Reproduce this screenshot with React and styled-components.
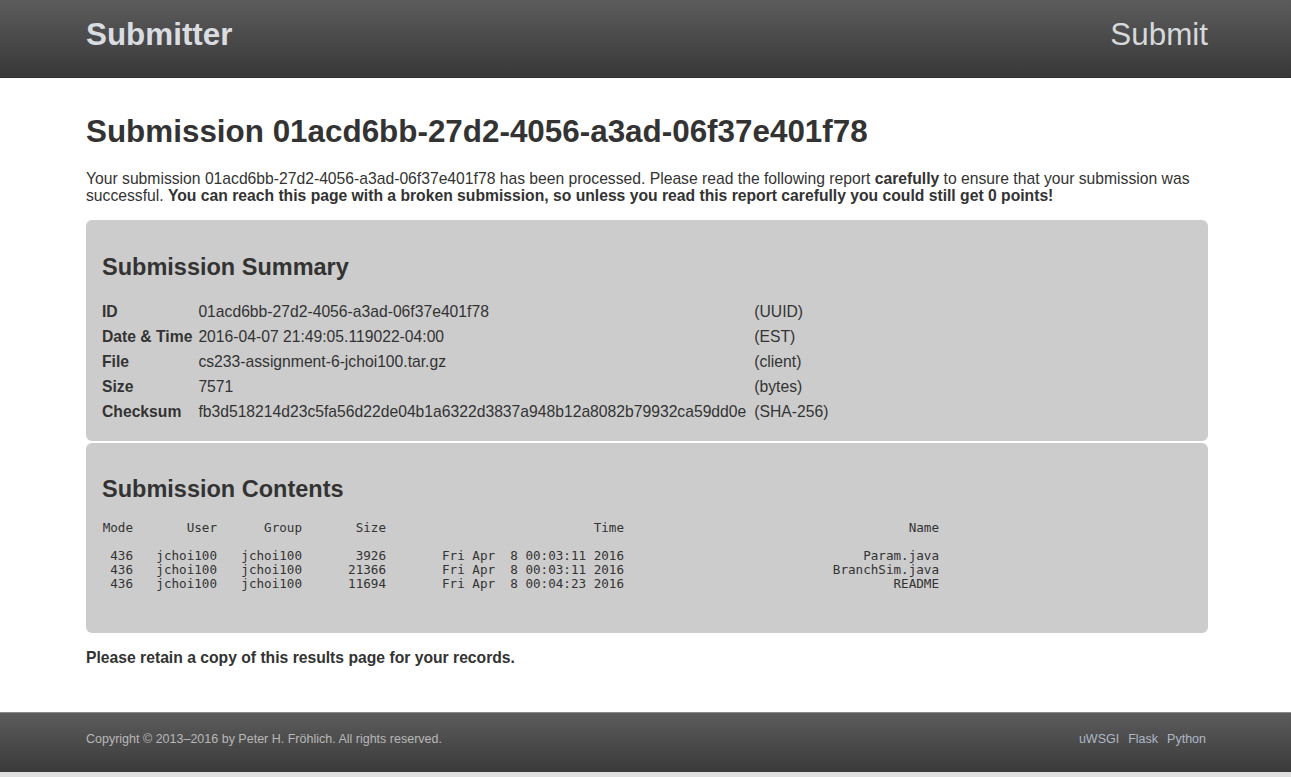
import React from "react";
import styled, { createGlobalStyle } from "styled-components";

const GlobalStyle = createGlobalStyle`
  html, body {
    margin: 0;
    padding: 0;
    background: #e2e2e2;
  }
  body {
    font-family: "Liberation Sans", Arial, sans-serif;
    color: #333;
  }
`;

const summary = [
  ["ID", "01acd6bb-27d2-4056-a3ad-06f37e401f78", "(UUID)"],
  ["Date & Time", "2016-04-07 21:49:05.119022-04:00", "(EST)"],
  ["File", "cs233-assignment-6-jchoi100.tar.gz", "(client)"],
  ["Size", "7571", "(bytes)"],
  ["Checksum", "fb3d518214d23c5fa56d22de04b1a6322d3837a948b12a8082b79932ca59dd0e", "(SHA-256)"],
];

const columns = [
  ["Mode", 31],
  ["User", 84],
  ["Group", 85],
  ["Size", 84],
  ["Time", 238],
  ["Name", 315],
];

const files = [
  ["436", "jchoi100", "jchoi100", "3926", "Fri Apr  8 00:03:11 2016", "Param.java"],
  ["436", "jchoi100", "jchoi100", "21366", "Fri Apr  8 00:03:11 2016", "BranchSim.java"],
  ["436", "jchoi100", "jchoi100", "11694", "Fri Apr  8 00:04:23 2016", "README"],
];

const App = () => {
  return (
    <>
      <GlobalStyle />
      <Page>
        <Header>
          <Bar>
            <Brand>Submitter</Brand>
            <NavLink>Submit</NavLink>
          </Bar>
        </Header>
        <Main>
          <Title>Submission 01acd6bb-27d2-4056-a3ad-06f37e401f78</Title>
          <Intro>
            Your submission 01acd6bb-27d2-4056-a3ad-06f37e401f78 has been processed. Please read the
            following report <b>carefully</b> to ensure that your submission was successful.{" "}
            <b>You can reach this page with a broken submission, so unless you read this report carefully you could still get 0 points!</b>
          </Intro>
          <Panel>
            <PanelTitle>Submission Summary</PanelTitle>
            <SummaryTable>
              <tbody>
                {summary.map(([k, v, u]) => (
                  <tr key={k}>
                    <th>{k}</th>
                    <td>{v}</td>
                    <td>{u}</td>
                  </tr>
                ))}
              </tbody>
            </SummaryTable>
          </Panel>
          <Panel $contents>
            <PanelTitle>Submission Contents</PanelTitle>
            <Listing>
              <ListHead>
                {columns.map(([name, w]) => (
                  <Cell key={name} $w={w}>{name}</Cell>
                ))}
              </ListHead>
              {files.map((f) => (
                <ListRow key={f[5]}>
                  {f.map((v, i) => (
                    <Cell key={i} $w={columns[i][1]}>{v}</Cell>
                  ))}
                </ListRow>
              ))}
            </Listing>
          </Panel>
          <Note>Please retain a copy of this results page for your records.</Note>
        </Main>
        <Footer>
          <Bar>
            <Copy>Copyright © 2013–2016 by Peter H. Fröhlich. All rights reserved.</Copy>
            <Links>
              <span>uWSGI</span>
              <span>Flask</span>
              <span>Python</span>
            </Links>
          </Bar>
        </Footer>
      </Page>
    </>
  );
};

export default App;

const Page = styled.div`
  display: flex;
  flex-direction: column;
  background: #fff;
`;

const Header = styled.header`
  height: 77px;
  background: linear-gradient(#5c5c5c, #383838);
  border-bottom: 1px solid #2e2e2e;
  display: flex;
  align-items: center;
`;

const Bar = styled.div`
  width: 1122px;
  margin-left: 86px;
  display: flex;
  align-items: center;
  justify-content: space-between;
`;

const Brand = styled.div`
  font-size: 31.4px;
  font-weight: bold;
  color: #d9dce0;
  margin-top: -7px;
`;

const NavLink = styled.div`
  font-size: 31.4px;
  color: #d6d9dc;
  margin-top: -7px;
`;

const Main = styled.main`
  width: 1122px;
  margin-left: 86px;
  padding-top: 36px;
  padding-bottom: 46px;
`;

const Title = styled.h1`
  margin: 0 0 20px;
  font-size: 31.4px;
  line-height: 36px;
  font-weight: bold;
  color: #333;
`;

const Intro = styled.p`
  margin: 0 0 16px;
  font-size: 15.7px;
  line-height: 17px;
  color: #333;
`;

const Panel = styled.section`
  background: #cccccc;
  border-radius: 6px;
  padding: ${(p) => (p.$contents ? "32px 16px 42px" : "33px 16px 17px")};
  & + & {
    margin-top: 2px;
  }
`;

const PanelTitle = styled.h2`
  margin: 0 0 18px;
  font-size: 23.5px;
  line-height: 28px;
  font-weight: bold;
  color: #333;
`;

const SummaryTable = styled.table`
  border-collapse: collapse;
  font-size: 15.7px;
  color: #333;
  th, td {
    padding: 0;
    height: 25px;
    text-align: left;
    vertical-align: middle;
    white-space: nowrap;
  }
  th {
    font-weight: bold;
    padding-right: 6px;
  }
  td {
    padding-right: 8px;
  }
`;

const Listing = styled.div`
  font-family: "DejaVu Sans Mono", "Liberation Mono", monospace;
  font-size: 12.6px;
  line-height: 14px;
  color: #333;
`;

const ListHead = styled.div`
  display: flex;
  margin-bottom: 14px;
`;

const ListRow = styled.div`
  display: flex;
`;

const Cell = styled.div`
  width: ${(p) => p.$w}px;
  flex: none;
  text-align: right;
  white-space: pre;
`;

const Note = styled.p`
  margin: 16px 0 0;
  font-size: 15.7px;
  line-height: 17px;
  font-weight: bold;
  color: #333;
`;

const Footer = styled.footer`
  height: 59px;
  background: linear-gradient(#5c5c5c, #3a3a3a);
  border-top: 1px solid #8a8a8a;
  border-bottom: 5px solid #e0e0e0;
  display: flex;
  align-items: center;
`;

const Copy = styled.div`
  font-size: 12.5px;
  color: #b8b8b8;
  margin-top: -7px;
`;

const Links = styled.div`
  display: flex;
  gap: 9px;
  font-size: 12.5px;
  color: #aeb8c6;
  margin-right: 2px;
  margin-top: -7px;
`;
